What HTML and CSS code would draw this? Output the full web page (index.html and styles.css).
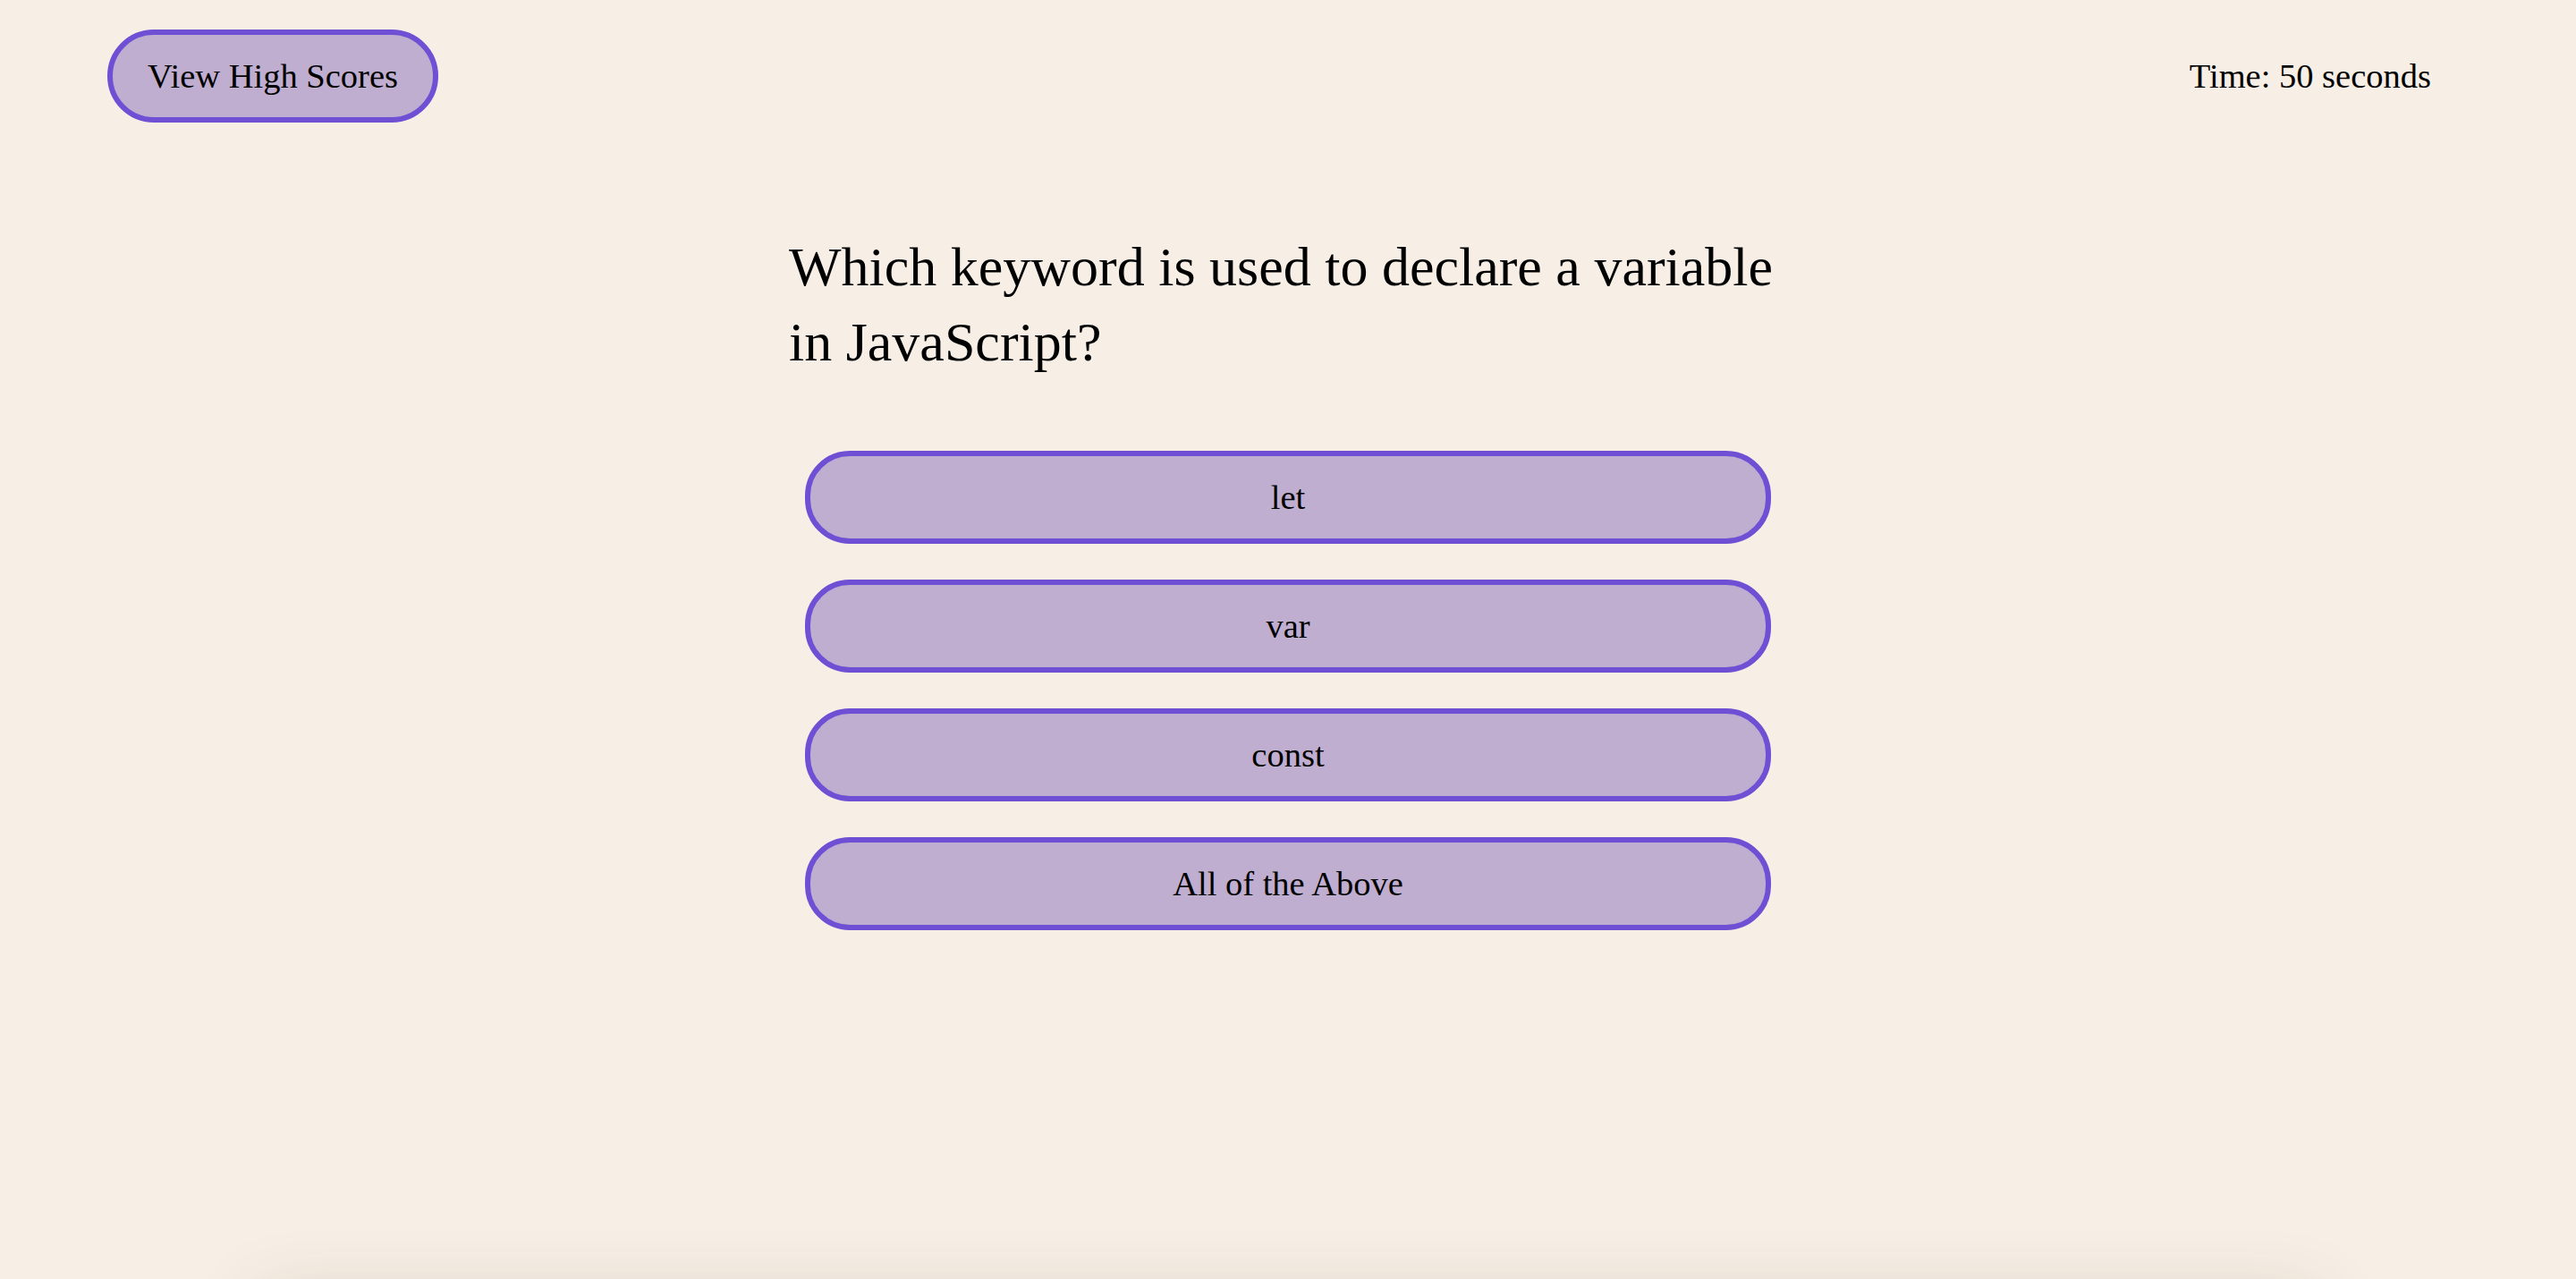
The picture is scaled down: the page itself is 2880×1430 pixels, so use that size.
FILE: index.html
```html
<!DOCTYPE html>
<html lang="en">
<head>
<meta charset="utf-8">
<title>Code Quiz</title>
<link rel="stylesheet" href="styles.css">
</head>
<body>
<header class="top-bar">
  <button class="pill-btn scores-btn">View High Scores</button>
  <div class="timer">Time: 50 seconds</div>
</header>
<main class="quiz">
  <h2 class="question">Which keyword is used to declare a variable in JavaScript?</h2>
  <div class="answers">
    <button class="pill-btn answer">let</button>
    <button class="pill-btn answer">var</button>
    <button class="pill-btn answer">const</button>
    <button class="pill-btn answer">All of the Above</button>
  </div>
</main>
<footer class="page-foot"></footer>
</body>
</html>
```
FILE: styles.css
```css
html, body {
  margin: 0;
  padding: 0;
}
html {
  overflow: hidden;
}
body {
  background: #f7efe6;
  font-family: "Liberation Serif", "DejaVu Serif", serif;
  color: #000;
  overflow: hidden;
  height: 1430px;
}
.top-bar {
  display: flex;
  justify-content: space-between;
  align-items: center;
  padding: 33px 162px 0 120px;
}
.pill-btn {
  font-family: "Liberation Serif", "DejaVu Serif", serif;
  background: #bfaed0;
  border: 6px solid #6f4fd4;
  border-radius: 52px;
  color: #000;
  height: 104px;
  font-size: 38.5px;
  box-sizing: border-box;
  padding: 0;
  cursor: pointer;
}
.scores-btn {
  width: 370px;
}
.timer {
  font-size: 38.5px;
  padding-bottom: 1px;
}
.quiz {
  width: 1116px;
  margin: 119px auto 0;
}
.question {
  font-size: 62px;
  font-weight: normal;
  line-height: 84px;
  margin: 0;
}
.answers {
  display: flex;
  flex-direction: column;
  gap: 40px;
  padding: 0 18px;
  margin-top: 80px;
}
.answer {
  width: 100%;
  border-radius: 50px;
}
.page-foot {
  width: 80%;
  height: 200px;
  margin: 410px auto 0;
  box-shadow: 0 0 80px rgba(60, 40, 10, 0.16);
}
```
